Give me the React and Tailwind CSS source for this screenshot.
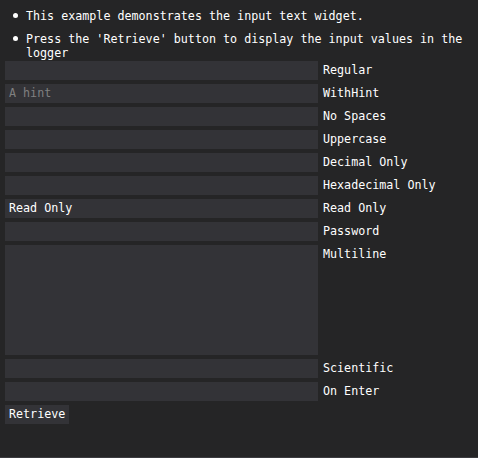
const FIELDS = [
  { label: 'Regular' },
  { label: 'WithHint', hint: 'A hint' },
  { label: 'No Spaces' },
  { label: 'Uppercase' },
  { label: 'Decimal Only' },
  { label: 'Hexadecimal Only' },
  { label: 'Read Only', value: 'Read Only' },
  { label: 'Password' },
  { label: 'Multiline', multiline: true },
  { label: 'Scientific' },
  { label: 'On Enter' },
]

function Bullet({ children }) {
  return (
    <div className="flex">
      <div className="w-[21px] h-[14px] flex items-center pl-[8px] shrink-0">
        <span className="block w-[5px] h-[5px] rounded-full bg-white" />
      </div>
      <div className="leading-[14px] pt-[1px]">{children}</div>
    </div>
  )
}

export default function App() {
  return (
    <div
      className="w-[478px] h-[458px] bg-[#252526] text-white text-[11.7px] border-b border-[#3c3c40] overflow-hidden"
      style={{ fontFamily: '"DejaVu Sans Mono", "Liberation Mono", monospace' }}
    >
      <div className="pl-[5px] pr-[8px] pt-[8px] flex flex-col">
        <Bullet>This example demonstrates the input text widget.</Bullet>
        <div className="h-[8px]" />
        <Bullet>Press the 'Retrieve' button to display the input values in the logger</Bullet>

        <div className="mt-[1px] flex flex-col gap-[4px]">
          {FIELDS.map(f => (
            <div key={f.label} className="flex items-start">
              <div
                className={`w-[313px] bg-[#333337] px-[4px] flex ${f.multiline ? 'h-[110px] items-start pt-[3px]' : 'h-[19px] items-center pt-[1px]'}`}
              >
                {f.hint && <span className="text-[#808080]">{f.hint}</span>}
                {f.value && <span>{f.value}</span>}
              </div>
              <div className="h-[19px] flex items-center pl-[5px] pt-[1px] whitespace-nowrap">{f.label}</div>
            </div>
          ))}
          <div className="flex">
            <div className="h-[19px] px-[4px] pt-[1px] flex items-center bg-[#333337]">Retrieve</div>
          </div>
        </div>
      </div>
    </div>
  )
}
